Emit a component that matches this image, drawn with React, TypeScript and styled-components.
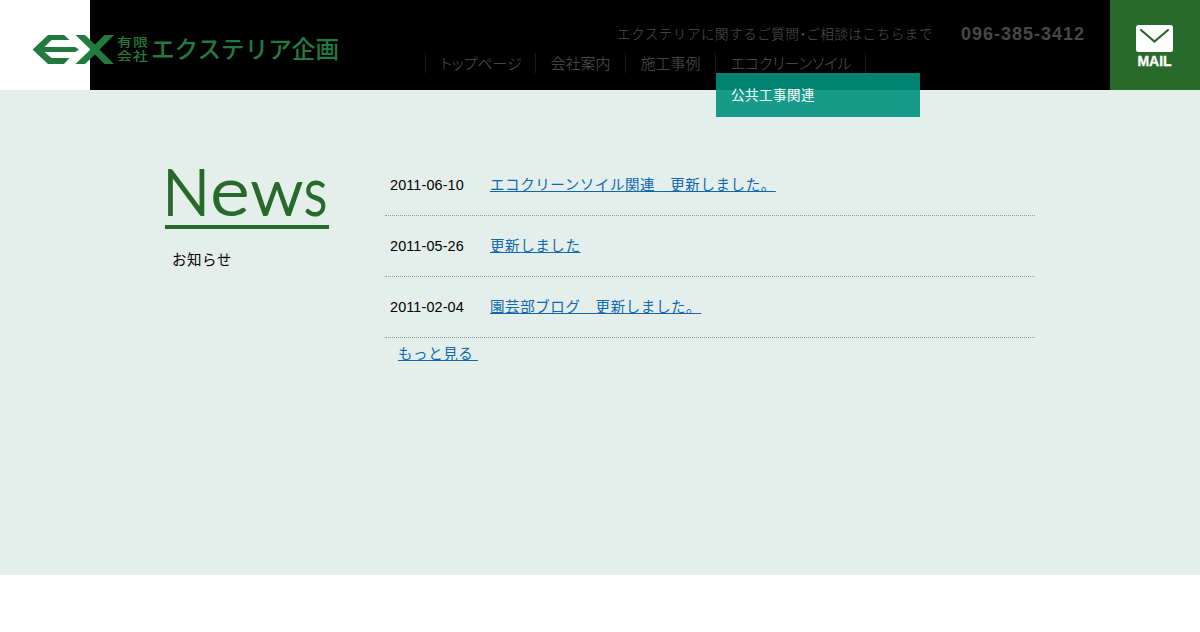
import React from "react";
import styled, { createGlobalStyle } from "styled-components";

const GlobalStyle = createGlobalStyle`
  body {
    margin: 0;
    background: #fff;
    color: #000;
    font-family: "Liberation Sans", "Noto Sans CJK JP", sans-serif;
    font-size: 14px;
    letter-spacing: 1px;
  }
`;

const Header = styled.header`
  display: flex;
  height: 90px;
`;

const Brand = styled.a`
  flex: none;
  width: 90px;
  height: 90px;
  background: #fff;
  position: relative;
  z-index: 1;
`;

const Logo = styled.svg`
  display: block;
  overflow: visible;
`;

const Bar = styled.div`
  flex: 1;
  background: #000;
  color: #484848;
`;

const Contact = styled.div`
  display: flex;
  justify-content: flex-end;
  box-sizing: border-box;
  height: 53px;
  padding: 22px 25px 0 0;
`;

const Lead = styled.span`
  width: 344px;
  padding-top: 1px;
  color: #525252;
  font-size: 13.5px;
  font-weight: 300;
  letter-spacing: 0.58px;
  line-height: 24px;
  white-space: nowrap;
`;

const Dot = styled.span`
  font-feature-settings: "halt";
  letter-spacing: 0;
`;

const Phone = styled.strong`
  font-size: 18px;
  line-height: 24px;
`;

const Nav = styled.nav`
  display: flex;
  margin-left: 335px;
  height: 20px;
`;

const NavItem = styled.div<{ $width: number; $last?: boolean }>`
  position: relative;
  box-sizing: border-box;
  width: ${(p) => p.$width + (p.$last ? 1 : 0)}px;
  border-left: 1px solid #151e15;
  border-right: ${(p) => (p.$last ? "1px solid #151e15" : "0")};
`;

const NavLabel = styled.a<{ $spacing: number }>`
  display: block;
  padding-left: 14.5px;
  color: #565656;
  font-size: 15px;
  font-weight: 300;
  font-feature-settings: "palt";
  line-height: 21px;
  letter-spacing: ${(p) => p.$spacing}px;
  white-space: nowrap;
`;

const SubMenu = styled.div`
  position: absolute;
  top: 20px;
  left: 0;
  box-sizing: border-box;
  width: 204px;
  height: 44px;
  padding-left: 15px;
  background: rgba(0, 144, 127, 0.9);
  color: #fff;
  font-size: 13.5px;
  letter-spacing: 0.5px;
  line-height: 45px;
`;

const MailLink = styled.a`
  display: flex;
  flex-direction: column;
  align-items: center;
  box-sizing: border-box;
  width: 90px;
  padding: 25px 1px 0 0;
  background: #28692c;
  color: #fff;
  font-size: 14px;
  font-weight: bold;
  line-height: 19px;
  letter-spacing: 0;
  -webkit-text-stroke: 0.3px #fff;
`;

const NewsSection = styled.section`
  display: flex;
  box-sizing: border-box;
  height: 485px;
  padding: 65px 165px 0;
  background: #e4efeb;
`;

const Heading = styled.div`
  width: 220px;
`;

const Title = styled.h2`
  width: 164px;
  height: 70px;
  margin: 0;
  border-bottom: 4px solid #28692c;
`;

const Subtitle = styled.p`
  margin: 20px 0 0 7px;
  font-size: 14.5px;
  letter-spacing: 0.5px;
  line-height: 23px;
`;

const List = styled.div`
  width: 650px;
`;

const Row = styled.div`
  display: flex;
  box-sizing: border-box;
  height: 61px;
  padding-left: 5px;
  border-bottom: 1px dotted #949b98;
  line-height: 60px;
`;

const DateText = styled.time`
  width: 100px;
  font-size: 14.4px;
  letter-spacing: 0.13px;
`;

const Link = styled.a`
  color: #0e67b0;
  font-size: 14.5px;
  letter-spacing: 0.58px;
  text-decoration: underline;
  white-space: pre;
`;

const More = styled.div`
  padding-left: 13px;
  line-height: 32px;
`;

const news = [
  { date: "2011-06-10", text: "エコクリーンソイル関連　更新しました。" },
  { date: "2011-05-26", text: "更新しました" },
  { date: "2011-02-04", text: "園芸部ブログ　更新しました。" },
];

export default function App() {
  return (
    <>
      <GlobalStyle />
      <Header>
        <Brand>
          <Logo width="340" height="90" fill="#237a3e" letterSpacing="0" fontFamily='"Noto Sans CJK JP", sans-serif'>
            <path d="M48 35H64L69.500 40H51.500L44.500 47H75L79 49.500L75 52H44.500L51.500 58H69.500L64 64H48L32.500 49.500Z" />
            <path d="M75.500 35H85L95 44.500L104.500 35H114L99.500 49.500L114 64H104.500L95 54.500L85 64H75.500L90.500 49.500Z" />
            <text fontSize="15" fontWeight="500" textLength="31" transform="translate(117 47) scale(1 .82)">有限</text>
            <text fontSize="15" fontWeight="500" textLength="31" transform="translate(117 60.500) scale(1 .82)">会社</text>
            <text x="151" y="58" fontSize="24" fontWeight="500" textLength="188" lengthAdjust="spacingAndGlyphs">エクステリア企画</text>
          </Logo>
        </Brand>
        <Bar>
          <Contact>
            <Lead>エクステリアに関するご質問<Dot>・</Dot>ご相談はこちらまで</Lead>
            <Phone>096-385-3412</Phone>
          </Contact>
          <Nav>
            <NavItem $width={110}><NavLabel $spacing={-0.1}>トップページ</NavLabel></NavItem>
            <NavItem $width={90}><NavLabel $spacing={0}>会社案内</NavLabel></NavItem>
            <NavItem $width={90}><NavLabel $spacing={0}>施工事例</NavLabel></NavItem>
            <NavItem $width={150} $last>
              <NavLabel $spacing={-0.05}>エコクリーンソイル</NavLabel>
              <SubMenu>公共工事関連</SubMenu>
            </NavItem>
          </Nav>
        </Bar>
        <MailLink>
          <svg width="37" height="27" viewBox="0 0 37 27">
            <rect width="37" height="27" rx="2.500" fill="#fff" />
            <path d="M5 5L18.500 16.500L32 5" fill="none" stroke="#28692c" strokeWidth="2.200" strokeLinecap="round" />
          </svg>
          MAIL
        </MailLink>
      </Header>
      <NewsSection>
        <Heading>
          <Title>
            <Logo width="164" height="70" fill="#28692c" stroke="#28692c" strokeWidth="2" letterSpacing="0" fontFamily="Lato, sans-serif" fontSize="64" fontWeight="300">
              <text transform="translate(-2.500 59.500) scale(.98 .98)">N</text>
              <text transform="translate(45.500 59.500) scale(1.16 1.040)">e</text>
              <text transform="translate(86 59.500) scale(1.060 1.010)">w</text>
              <text transform="translate(139 59.500) scale(.85 1.040)">s</text>
            </Logo>
          </Title>
          <Subtitle>お知らせ</Subtitle>
        </Heading>
        <List>
          {news.map((item) => (
            <Row key={item.date}>
              <DateText>{item.date}</DateText>
              <Link>{item.text}</Link>
            </Row>
          ))}
          <More><Link>{"もっと見る "}</Link></More>
        </List>
      </NewsSection>
    </>
  );
}
